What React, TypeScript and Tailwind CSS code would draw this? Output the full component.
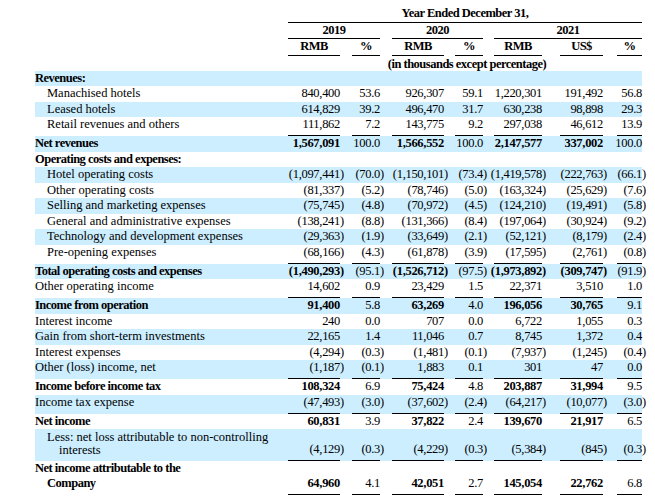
import type { ReactNode } from 'react'
import clsx from 'clsx'

type Row = {
  label: ReactNode
  values?: string[]
  bold?: boolean
  boldNums?: boolean
  bg?: boolean
  indent?: boolean
  under?: boolean
  labelClass?: string
}

// value column widths and the space before each (x: 288 .. 642)
const cols = [
  { w: 'w-[52px]', ml: '' },
  { w: 'w-[28px]', ml: 'ml-[8px]' },
  { w: 'w-[52px]', ml: 'ml-[8px]' },
  { w: 'w-[28px]', ml: 'ml-[7px]' },
  { w: 'w-[48px]', ml: 'ml-[7px]' },
  { w: 'w-[43px]', ml: 'ml-[14px]' },
  { w: 'w-[25px]', ml: 'ml-[10px]' },
]

// gaps between the ruled segments (parenthesis space + column spacing)
const gaps = ['w-[12px]', 'w-[12px]', 'w-[11px]', 'w-[11px]', 'w-[18px]', 'w-[14px]']

const rows: Row[] = [
  { label: 'Revenues:', bold: true, bg: true },
  { label: 'Manachised hotels', indent: true, values: ['840,400', '53.6', '926,307', '59.1', '1,220,301', '191,492', '56.8'] },
  { label: 'Leased hotels', indent: true, bg: true, values: ['614,829', '39.2', '496,470', '31.7', '630,238', '98,898', '29.3'] },
  { label: 'Retail revenues and others', indent: true, under: true, values: ['111,862', '7.2', '143,775', '9.2', '297,038', '46,612', '13.9'] },
  { label: 'Net revenues', bold: true, boldNums: true, bg: true, values: ['1,567,091', '100.0', '1,566,552', '100.0', '2,147,577', '337,002', '100.0'] },
  { label: 'Operating costs and expenses:', bold: true },
  { label: 'Hotel operating costs', indent: true, bg: true, values: ['(1,097,441)', '(70.0)', '(1,150,101)', '(73.4)', '(1,419,578)', '(222,763)', '(66.1)'] },
  { label: 'Other operating costs', indent: true, values: ['(81,337)', '(5.2)', '(78,746)', '(5.0)', '(163,324)', '(25,629)', '(7.6)'] },
  { label: 'Selling and marketing expenses', indent: true, bg: true, values: ['(75,745)', '(4.8)', '(70,972)', '(4.5)', '(124,210)', '(19,491)', '(5.8)'] },
  { label: 'General and administrative expenses', indent: true, values: ['(138,241)', '(8.8)', '(131,366)', '(8.4)', '(197,064)', '(30,924)', '(9.2)'] },
  { label: 'Technology and development expenses', indent: true, bg: true, values: ['(29,363)', '(1.9)', '(33,649)', '(2.1)', '(52,121)', '(8,179)', '(2.4)'] },
  { label: 'Pre-opening expenses', indent: true, under: true, values: ['(68,166)', '(4.3)', '(61,878)', '(3.9)', '(17,595)', '(2,761)', '(0.8)'] },
  { label: 'Total operating costs and expenses', bold: true, boldNums: true, bg: true, values: ['(1,490,293)', '(95.1)', '(1,526,712)', '(97.5)', '(1,973,892)', '(309,747)', '(91.9)'] },
  { label: 'Other operating income', under: true, values: ['14,602', '0.9', '23,429', '1.5', '22,371', '3,510', '1.0'] },
  { label: 'Income from operation', bold: true, boldNums: true, bg: true, values: ['91,400', '5.8', '63,269', '4.0', '196,056', '30,765', '9.1'] },
  { label: 'Interest income', values: ['240', '0.0', '707', '0.0', '6,722', '1,055', '0.3'] },
  { label: 'Gain from short-term investments', bg: true, values: ['22,165', '1.4', '11,046', '0.7', '8,745', '1,372', '0.4'] },
  { label: 'Interest expenses', values: ['(4,294)', '(0.3)', '(1,481)', '(0.1)', '(7,937)', '(1,245)', '(0.4)'] },
  { label: 'Other (loss) income, net', bg: true, under: true, values: ['(1,187)', '(0.1)', '1,883', '0.1', '301', '47', '0.0'] },
  { label: 'Income before income tax', bold: true, boldNums: true, values: ['108,324', '6.9', '75,424', '4.8', '203,887', '31,994', '9.5'] },
  { label: 'Income tax expense', bg: true, under: true, values: ['(47,493)', '(3.0)', '(37,602)', '(2.4)', '(64,217)', '(10,077)', '(3.0)'] },
  { label: 'Net income', bold: true, boldNums: true, values: ['60,831', '3.9', '37,822', '2.4', '139,670', '21,917', '6.5'] },
  {
    label: (
      <>
        <div>Less: net loss attributable to non-controlling</div>
        <div className="pl-[12px]">interests</div>
      </>
    ),
    indent: true,
    bg: true,
    under: true,
    labelClass: 'leading-[13px] pt-[2px]',
    values: ['(4,129)', '(0.3)', '(4,229)', '(0.3)', '(5,384)', '(845)', '(0.3)'],
  },
  {
    label: (
      <>
        <div>Net income attributable to the</div>
        <div className="pl-[12px]">Company</div>
      </>
    ),
    bold: true,
    boldNums: true,
    under: true,
    values: ['64,960', '4.1', '42,051', '2.7', '145,054', '22,762', '6.8'],
  },
]

function NumCell({ value, i, bold }: { value: string; i: number; bold?: boolean }) {
  const neg = value.endsWith(')')
  const main = neg ? value.slice(0, -1) : value
  const isBold = bold && i !== 1 && i !== 3 && i !== 6
  return (
    <div className={clsx('flex shrink-0', cols[i].ml)}>
      <div className={clsx(cols[i].w, 'flex justify-end whitespace-nowrap tracking-[-0.3px]', isBold && 'font-bold')}>
        {main}
      </div>
      <div className={clsx('whitespace-nowrap', i === 6 ? 'w-0' : 'w-[4px]', isBold && 'font-bold')}>
        {neg ? ')' : ''}
      </div>
    </div>
  )
}

// one black 1px band under the value columns; the gaps are painted in the row colour
function Rules({ bg }: { bg?: boolean }) {
  return (
    <div className="mt-[2.5px] ml-[253px] flex h-px w-[354px] bg-black">
      {cols.map((c, i) => (
        <div key={i} className="contents">
          <div className={clsx(c.w, 'h-px shrink-0')} />
          {i < 6 && <div className={clsx(gaps[i], 'h-px shrink-0', bg ? 'bg-[#cceeff]' : 'bg-white')} />}
        </div>
      ))}
    </div>
  )
}

function HeaderCell({ i, text }: { i: number; text: string }) {
  return (
    <div className={clsx('flex shrink-0', cols[i].ml)}>
      <div className={clsx(cols[i].w, 'border-b border-black text-center')}>{text}</div>
      <div className={i === 6 ? 'w-0' : 'w-[4px]'} />
    </div>
  )
}

export default function App() {
  return (
    <div className="min-h-[501px] w-[655px] bg-white pl-[35px] pt-[6px] font-['Liberation_Serif',serif] text-[12.5px] leading-[15.5px] text-black">
      {/* column headers */}
      <div className="flex font-bold tracking-[-0.5px]">
        <div className="w-[253px] shrink-0" />
        <div className="w-[354px] border-b border-black text-center">Year Ended December 31,</div>
      </div>
      <div className="flex font-bold tracking-[-0.5px]">
        <div className="w-[253px] shrink-0" />
        <div className="w-[92px] border-b border-black text-center">2019</div>
        <div className="ml-[12px] w-[91px] border-b border-black text-center">2020</div>
        <div className="ml-[11px] w-[148px] border-b border-black text-center">2021</div>
      </div>
      <div className="flex font-bold tracking-[-0.5px]">
        <div className="w-[253px] shrink-0" />
        {['RMB', '%', 'RMB', '%', 'RMB', 'US$', '%'].map((t, i) => (
          <HeaderCell key={i} i={i} text={t} />
        ))}
      </div>
      <div className="flex h-[15px] font-bold tracking-[-0.5px]">
        <div className="w-[253px] shrink-0" />
        <div className="w-[358px] pt-[1px] text-center">(in thousands except percentage)</div>
      </div>

      {/* body */}
      {rows.map((r, idx) => (
        <div key={idx} className={clsx('w-[607px]', r.bg && 'bg-[#cceeff]')}>
          <div className="flex items-end">
            <div
              className={clsx(
                'w-[253px] shrink-0 self-stretch',
                r.indent && 'pl-[12px]',
                r.bold && 'font-bold tracking-[-0.5px]',
                r.labelClass,
              )}
            >
              {r.label}
            </div>
            {r.values?.map((v, i) => (
              <NumCell key={i} value={v} i={i} bold={r.boldNums} />
            ))}
          </div>
          {r.under && <Rules bg={r.bg} />}
        </div>
      ))}
    </div>
  )
}
